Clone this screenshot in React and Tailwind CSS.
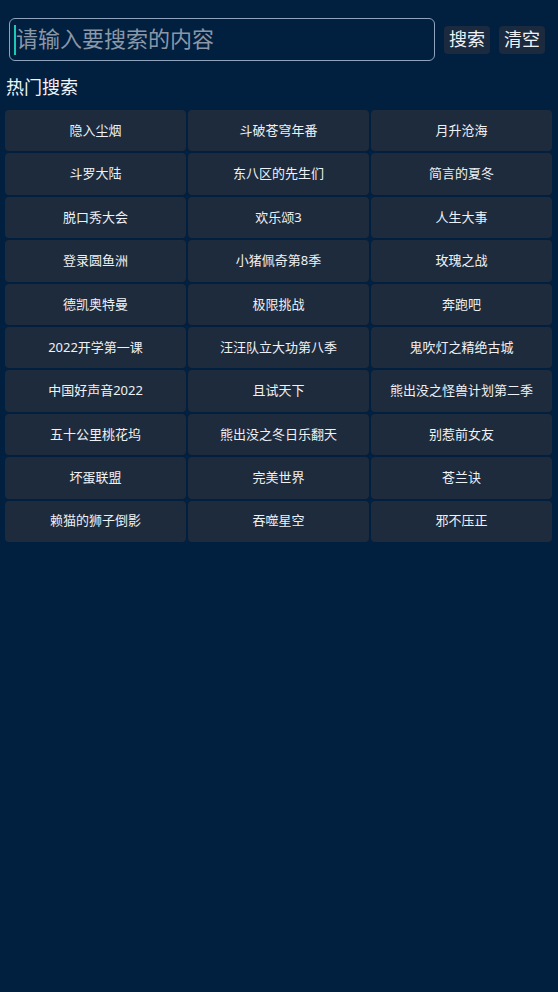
import React from "react";

const items = [
  "隐入尘烟", "斗破苍穹年番", "月升沧海",
  "斗罗大陆", "东八区的先生们", "简言的夏冬",
  "脱口秀大会", "欢乐颂3", "人生大事",
  "登录圆鱼洲", "小猪佩奇第8季", "玫瑰之战",
  "德凯奥特曼", "极限挑战", "奔跑吧",
  "2022开学第一课", "汪汪队立大功第八季", "鬼吹灯之精绝古城",
  "中国好声音2022", "且试天下", "熊出没之怪兽计划第二季",
  "五十公里桃花坞", "熊出没之冬日乐翻天", "别惹前女友",
  "坏蛋联盟", "完美世界", "苍兰诀",
  "赖猫的狮子倒影", "吞噬星空", "邪不压正",
];

export default function App() {
  return (
    <div
      className="w-[558px] h-[992px] bg-[#011f3e] text-white"
      style={{ fontFamily: '"Noto Sans", "Noto Sans CJK SC", sans-serif' }}
    >
      <div className="flex items-center pl-[9px] pt-[18px]">
        <div className="shrink-0 w-[426px] h-[43px] rounded-[6px] border border-[#8fa3bc] flex items-center pl-[4px]">
          <div className="w-[2px] h-[30px] bg-[#1fc7b6]" />
          <span className="text-[22px] text-[#8a97a8] leading-none whitespace-nowrap pb-[3px]">请输入要搜索的内容</span>
        </div>
        <div className="shrink-0 whitespace-nowrap ml-[9px] h-[28px] w-[46px] rounded-[4px] bg-[#1b2a3e] flex items-center justify-center text-[18px] text-[#eef2f6] leading-none pb-[2px]">
          搜索
        </div>
        <div className="shrink-0 whitespace-nowrap ml-[9px] h-[28px] w-[46px] rounded-[4px] bg-[#1b2a3e] flex items-center justify-center text-[18px] text-[#eef2f6] leading-none pb-[2px]">
          清空
        </div>
      </div>
      <div className="pl-[6px] mt-[14px] text-[18px] leading-[24px] text-[#f2f5f8]">热门搜索</div>
      <div className="grid grid-cols-3 gap-[2px] pl-[5px] pr-[6px] mt-[11px]">
        {items.map((t, i) => (
          <div
            key={i}
            className="h-[41.4px] rounded-[4px] bg-[#1e2b3c] flex items-center justify-center text-[13px] text-[#eef1f5]"
          >
            {t}
          </div>
        ))}
      </div>
    </div>
  );
}
